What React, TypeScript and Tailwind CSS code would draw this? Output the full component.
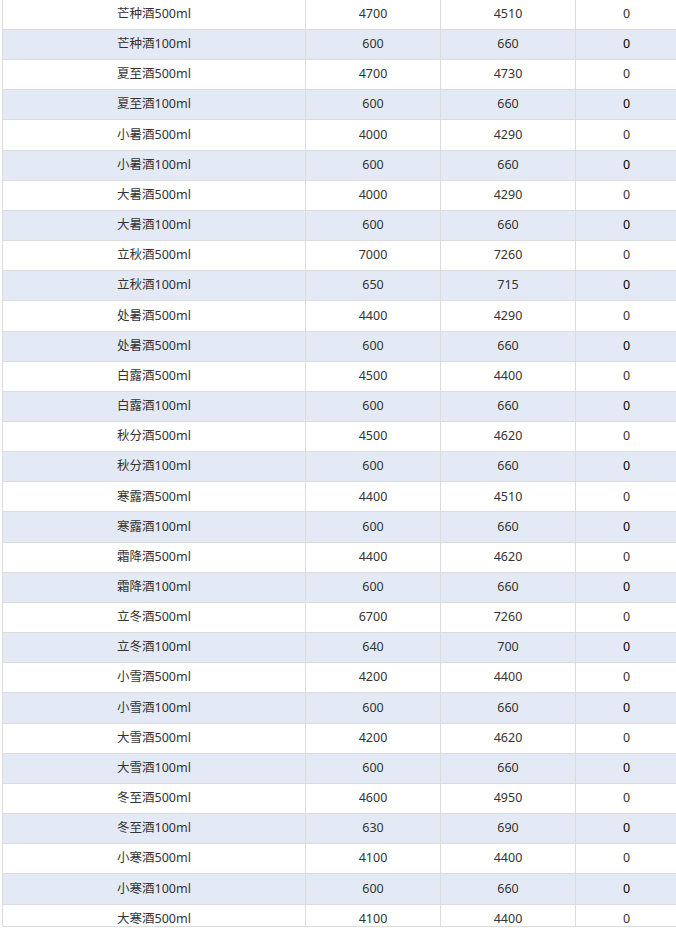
const rows: [string, string, string, string][] = [
  ['芒种酒500ml', '4700', '4510', '0'],
  ['芒种酒100ml', '600', '660', '0'],
  ['夏至酒500ml', '4700', '4730', '0'],
  ['夏至酒100ml', '600', '660', '0'],
  ['小暑酒500ml', '4000', '4290', '0'],
  ['小暑酒100ml', '600', '660', '0'],
  ['大暑酒500ml', '4000', '4290', '0'],
  ['大暑酒100ml', '600', '660', '0'],
  ['立秋酒500ml', '7000', '7260', '0'],
  ['立秋酒100ml', '650', '715', '0'],
  ['处暑酒500ml', '4400', '4290', '0'],
  ['处暑酒500ml', '600', '660', '0'],
  ['白露酒500ml', '4500', '4400', '0'],
  ['白露酒100ml', '600', '660', '0'],
  ['秋分酒500ml', '4500', '4620', '0'],
  ['秋分酒100ml', '600', '660', '0'],
  ['寒露酒500ml', '4400', '4510', '0'],
  ['寒露酒100ml', '600', '660', '0'],
  ['霜降酒500ml', '4400', '4620', '0'],
  ['霜降酒100ml', '600', '660', '0'],
  ['立冬酒500ml', '6700', '7260', '0'],
  ['立冬酒100ml', '640', '700', '0'],
  ['小雪酒500ml', '4200', '4400', '0'],
  ['小雪酒100ml', '600', '660', '0'],
  ['大雪酒500ml', '4200', '4620', '0'],
  ['大雪酒100ml', '600', '660', '0'],
  ['冬至酒500ml', '4600', '4950', '0'],
  ['冬至酒100ml', '630', '690', '0'],
  ['小寒酒500ml', '4100', '4400', '0'],
  ['小寒酒100ml', '600', '660', '0'],
  ['大寒酒500ml', '4100', '4400', '0'],
];

export default function App() {
  return (
    <div
      className="w-[676px] h-[930px] bg-white overflow-hidden"
      style={{ fontFamily: '"Noto Sans", "Noto Sans CJK SC", sans-serif' }}
    >
      {/* scroll area, clipped at the bottom */}
      <div className="ml-[2px] w-[676px] h-[927px] overflow-hidden border-b border-l border-[#dcdcdc]">
        <div className="-mt-[0.2px]">
          {rows.map((r, i) => (
            <div
              key={i}
              className={`grid grid-cols-[303px_135px_135px_101px] h-[30.17px] border-b border-[#dcdcdc] text-[12.5px] text-[#333] ${
                i % 2 === 1 ? 'bg-[#e4eaf5]' : 'bg-white'
              }`}
            >
              <div className="flex items-center justify-center border-r border-[#dcdcdc]">{r[0]}</div>
              <div className="flex items-center justify-center border-r border-[#dcdcdc]">{r[1]}</div>
              <div className="flex items-center justify-center border-r border-[#dcdcdc]">{r[2]}</div>
              <div className={`flex items-center justify-center ${i % 2 === 1 ? 'text-black' : ''}`}>{r[3]}</div>
            </div>
          ))}
        </div>
      </div>
    </div>
  );
}
